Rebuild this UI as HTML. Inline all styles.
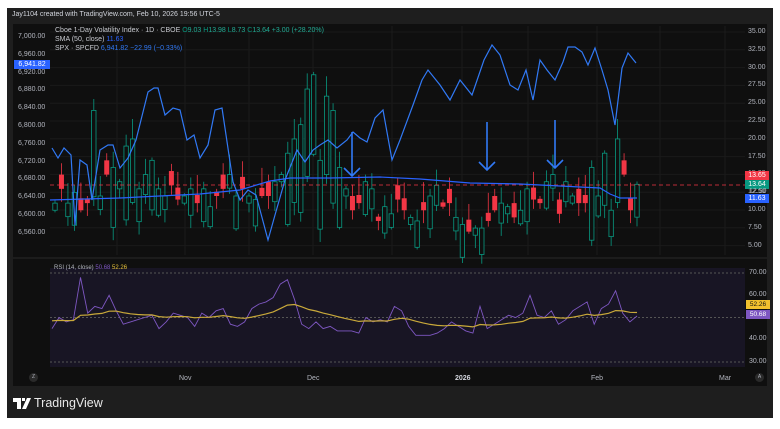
<!DOCTYPE html>
<html><head><meta charset="utf-8"><style>
html,body{margin:0;padding:0;background:#fff;width:780px;height:429px;overflow:hidden;font-family:"Liberation Sans",sans-serif}
#frame{position:absolute;left:7px;top:8px;width:766px;height:410px;background:#1e1e1e}
#chart{position:absolute;left:13px;top:24px;width:754px;height:362px;background:#0f0f0f}
.t{position:absolute;font-size:7px;color:#b2b5be;white-space:nowrap}
svg{position:absolute;left:0;top:0}
</style></head><body>
<div id="frame"></div>
<div id="chart"></div>
<div class="t" style="left:12px;top:11px;color:#d1d4dc;font-size:7px">Jay1104 created with TradingView.com, Feb 10, 2026 19:56 UTC-5</div>
<svg id="s" width="780" height="429"></svg>
<div class="t" style="left:55px;top:27px;color:#c8cad0">Cboe 1-Day Volatility Index · 1D · CBOE <span style="color:#089981">O</span><span style="color:#22ab94">9.03</span> <span style="color:#089981">H</span><span style="color:#22ab94">13.98</span> <span style="color:#089981">L</span><span style="color:#22ab94">8.73</span> <span style="color:#089981">C</span><span style="color:#22ab94">13.64 +3.00 (+28.20%)</span></div>
<div class="t" style="left:55px;top:36px;color:#c8cad0">SMA (50, close) <span style="color:#2962ff">11.63</span></div>
<div class="t" style="left:55px;top:45px;color:#c8cad0">SPX · SPCFD <span style="color:#3179f5">6,941.82 −22.99 (−0.33%)</span></div>
<div class="t" style="left:54px;top:265px;color:#b2b5be;font-size:6px">RSI (14, close) <span style="color:#7e57c2">50.68</span> <span style="color:#e8c33a">52.26</span></div>
<div id="ax"></div>
<div style="position:absolute;left:14px;top:60px;width:36px;height:9px;background:#2962ff;color:#fff;font-size:7px;line-height:9px;text-align:center">6,941.82</div>
<div style="position:absolute;left:745px;top:171px;width:24px;height:9px;background:#f23645;color:#fff;font-size:7px;line-height:9px;text-align:center">13.65</div>
<div style="position:absolute;left:745px;top:180px;width:24px;height:9px;background:#089981;color:#fff;font-size:7px;line-height:9px;text-align:center">13.64</div>
<div class="t" style="left:749px;top:188px;font-size:7px">12.50</div>
<div style="position:absolute;left:745px;top:194px;width:24px;height:9px;background:#2962ff;color:#fff;font-size:7px;line-height:9px;text-align:center">11.63</div>
<div style="position:absolute;left:746px;top:300px;width:24px;height:9px;background:#f2c12e;color:#111;font-size:6.5px;line-height:9px;text-align:center">52.26</div>
<div style="position:absolute;left:746px;top:310px;width:24px;height:9px;background:#7e57c2;color:#fff;font-size:6.5px;line-height:9px;text-align:center">50.68</div>
<div class="t" style="left:29px;top:373px;width:9px;height:9px;border-radius:5px;background:#2a2a2a;font-size:5px;line-height:9px;text-align:center">Z</div>
<div class="t" style="left:755px;top:373px;width:9px;height:9px;border-radius:5px;background:#2a2a2a;font-size:5px;line-height:9px;text-align:center">A</div>
<div class="t" style="left:179px;top:375px">Nov</div>
<div class="t" style="left:307px;top:375px">Dec</div>
<div class="t" style="left:455px;top:375px;color:#d1d4dc;font-weight:bold">2026</div>
<div class="t" style="left:591px;top:375px">Feb</div>
<div class="t" style="left:719px;top:375px">Mar</div>
<svg width="780" height="429" style="pointer-events:none"><path d="M13 398H21V409H17V402H13Z M22 398H25V401H22Z M27 398H31L26 409H22Z" fill="#fff"/></svg>
<div style="position:absolute;left:34px;top:396px;color:#e8e8e8;font-size:12.5px">TradingView</div>
<script>
var s=document.getElementById('s'),h='';
for(var x of [117,185,249,313,392,462,528,597,660,725])h+='<line x1="'+x+'" y1="26" x2="'+x+'" y2="255" stroke="#1b1b1b"/>';
for(var i=0;i<13;i++){var y=32+i*17.8;h+='<line x1="50" y1="'+y+'" x2="745" y2="'+y+'" stroke="#1a1a1a"/>';}
h+='<rect x="50" y="268" width="695" height="99" fill="#181524"/>';
[273,317.5,362].forEach(function(y){h+='<line x1="50" y1="'+y+'" x2="745" y2="'+y+'" stroke="#555" stroke-dasharray="2,2"/>';});
h+='<line x1="13" y1="258" x2="767" y2="258" stroke="#2a2a2a"/>';
var ax='';
for(var i=0;i<13;i++){var v=(35-i*2.5).toFixed(2);ax+='<div class="t" style="left:748px;top:'+(28+i*17.8)+'px">'+v+'</div>';}
for(var i=0;i<12;i++){var v=7000-i*40;ax+='<div class="t" style="left:18px;top:'+(33+i*17.8)+'px">'+v.toLocaleString('en-US')+'.00</div>';}
[[70,269],[60,291],[40,335],[30,358]].forEach(function(a){ax+='<div class="t" style="left:749px;top:'+a[1]+'px">'+a[0].toFixed(2)+'</div>';});
document.getElementById('ax').innerHTML=ax;
var c=[11,13,11,12.5,10,11,24,12,15,16,14,19,20,13,15,17,13,12,13.5,11.5,12,13,11,13,10.5,12,13,15,12,13,12,11.5,12,12,14,15,18,20,22,27,29,17,26,24,16,13,10,11,14,13,8.5,10.5,9.5,11.5,10,9,8.5,10,12,13.5,10.5,11,9,8,7,7.5,7.5,8.5,10,11,10.5,9,10,13,11.5,11,14,15,9.5,14,12,11,11,16,12,18,10,20,15,10,13.64];
function Y(v){return 32+(35-v)*7.13;}
var n=c.length,dx=(637-55)/(n-1);
for(var i=0;i<n;i++){var x=55+i*dx,cl=c[i],up=((i*5)%7)<4,sz=1+((i*3)%5)*0.9;
if(cl>15.5)up=true;
if(up&&cl>15.5)sz+=cl*0.35;
var op=up?cl-sz:cl+Math.min(sz*0.6,2);
if(i==n-1){op=9.03;up=true;}
var hi=Math.max(op,cl)+0.4+((i*7)%5)*0.6,lo=Math.min(op,cl)-0.3-((i*3)%4)*0.5;
var col=up?'#089981':'#f23645';
h+='<line x1="'+x+'" y1="'+Y(hi)+'" x2="'+x+'" y2="'+Y(lo)+'" stroke="'+col+'" stroke-width="0.8"/>';
var t=Y(Math.max(op,cl)),b=Y(Math.min(op,cl));if(b-t<1.5)b=t+1.5;
if(up)h+='<rect x="'+(x-2.2)+'" y="'+t+'" width="4.4" height="'+(b-t)+'" fill="#0f0f0f" stroke="'+col+'" stroke-width="0.8"/>';
else h+='<rect x="'+(x-2.5)+'" y="'+t+'" width="5" height="'+(b-t)+'" fill="'+col+'"/>';}
h+='<line x1="50" y1="185" x2="745" y2="185" stroke="#f23645" stroke-dasharray="4,3" stroke-width="0.8"/>';
h+='<polyline fill="none" stroke="#2962ff" stroke-width="1.2" points="50,200 120,198 200,194 240,190 270,181 290,178 330,178 380,177 420,179 470,183 520,184 560,186 600,188 610,194 620,198 637,198"/>';
h+='<polyline fill="none" stroke="#3179f5" stroke-width="1.2" points="52,148 58,158 64,148 71,155 75,225 80,160 87,165 92,200 100,150 108,145 113,145 120,168 128,158 136,140 148,92 154,88 158,88 165,115 173,108 180,110 187,140 194,135 200,158 208,145 215,110 222,108 233,182 240,200 248,190 256,195 268,240 275,215 285,180 297,150 305,162 313,150 320,145 328,140 337,148 347,140 353,132 360,138 367,142 375,118 383,110 392,160 400,140 413,105 422,80 428,70 440,85 450,100 460,80 472,95 484,60 492,45 500,55 510,85 518,90 526,70 533,100 540,60 547,70 555,80 563,62 568,47 575,47 582,52 588,65 595,48 602,70 608,90 615,125 622,68 628,53 636,63"/>';
[[352,132,176],[487,122,170],[555,120,168]].forEach(function(a){h+='<path d="M'+a[0]+' '+a[1]+'V'+a[2]+'M'+(a[0]-8)+' '+(a[2]-8)+'L'+a[0]+' '+a[2]+'L'+(a[0]+8)+' '+(a[2]-8)+'" fill="none" stroke="#3179f5" stroke-width="1.6"/>';});
var r=[45,50,48,49,68,52,55,54,60,53,47,48,49,50,51,45,48,52,51,50,46,52,50,53,54,47,46,48,54,56,57,59,65,67,58,47,45,48,45,46,44,44,44,43,50,48,49,48,55,53,46,42,42,42,43,45,48,46,44,43,55,45,47,49,51,50,52,60,51,50,53,47,49,53,55,57,47,54,56,62,52,48,50.68];
function RY(v){return 273+(70-v)*89/40;}
var m=r.length,rx=(637-52)/(m-1),p1='',p2='',ma=49;
for(var i=0;i<m;i++){var x=52+i*rx;p1+=x.toFixed(1)+','+RY(r[i]).toFixed(1)+' ';ma=ma+(r[i]-ma)*0.12;if(i==m-1)ma=52.26;p2+=x.toFixed(1)+','+RY(ma).toFixed(1)+' ';}
h+='<polyline fill="none" stroke="#7e57c2" stroke-width="0.9" points="'+p1+'"/>';
h+='<polyline fill="none" stroke="#c9a93a" stroke-width="1.2" points="'+p2+'"/>';
s.innerHTML=h;
</script>
</body></html>
